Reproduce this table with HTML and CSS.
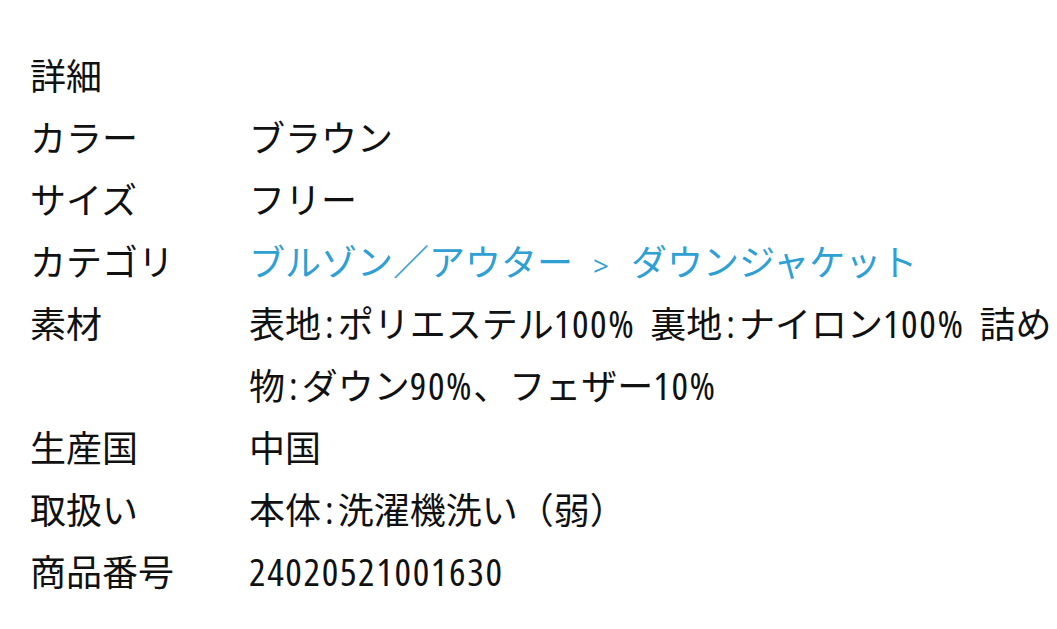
FILE: index.html
```html
<!DOCTYPE html>
<html lang="ja">
<head>
<meta charset="utf-8">
<title>詳細</title>
<link rel="stylesheet" href="styles.css">
</head>
<body>
<section class="detail">
  <h2 class="detail-title">詳細</h2>
  <dl class="spec">
    <dt>カラー</dt><dd>ブラウン</dd>
    <dt>サイズ</dt><dd>フリー</dd>
    <dt>カテゴリ</dt><dd><a class="cat" href="#">ブルゾン／アウター</a><span class="sep">&gt;</span><a class="cat" href="#">ダウンジャケット</a></dd>
    <dt>素材</dt><dd>表地<span class="colon">:</span>ポリエステル<span class="lat">100% </span>裏地<span class="colon">:</span>ナイロン<span class="lat">100% </span>詰め物<span class="colon">:</span>ダウン<span class="lat">90%</span>、フェザー<span class="lat">10%</span></dd>
    <dt>生産国</dt><dd>中国</dd>
    <dt>取扱い</dt><dd>本体<span class="colon">:</span>洗濯機洗い（弱）</dd>
    <dt>商品番号</dt><dd><span class="lat">24020521001630</span></dd>
  </dl>
</section>
</body>
</html>
```

FILE: styles.css
```css
html, body {
  margin: 0;
  padding: 0;
  background: #fff;
}
body {
  font-family: "Noto Sans CJK JP", sans-serif;
  font-size: 36px;
  line-height: 62px;
  color: #111;
}
.detail {
  padding: 43px 0 0 30px;
}
.detail-title {
  margin: 0;
  font-size: inherit;
  font-weight: normal;
}
.spec {
  margin: 0;
  display: grid;
  grid-template-columns: 219px 1fr;
}
.spec dt, .spec dd {
  margin: 0;
}
.lat, .colon {
  font-family: "Open Sans", "Noto Sans CJK JP", sans-serif;
  font-stretch: 75%;
  font-size: 39px;
  line-height: 39px;
}
.lat {
  letter-spacing: 1.6px;
  word-spacing: 6px;
}
.colon {
  margin: 0 4px;
}
.cat, .sep {
  color: #2ea0d3;
  text-decoration: none;
}
.sep {
  font-family: "Open Sans", sans-serif;
  font-size: 28px;
  line-height: 28px;
  margin: 0 22px 0 20px;
}
```
